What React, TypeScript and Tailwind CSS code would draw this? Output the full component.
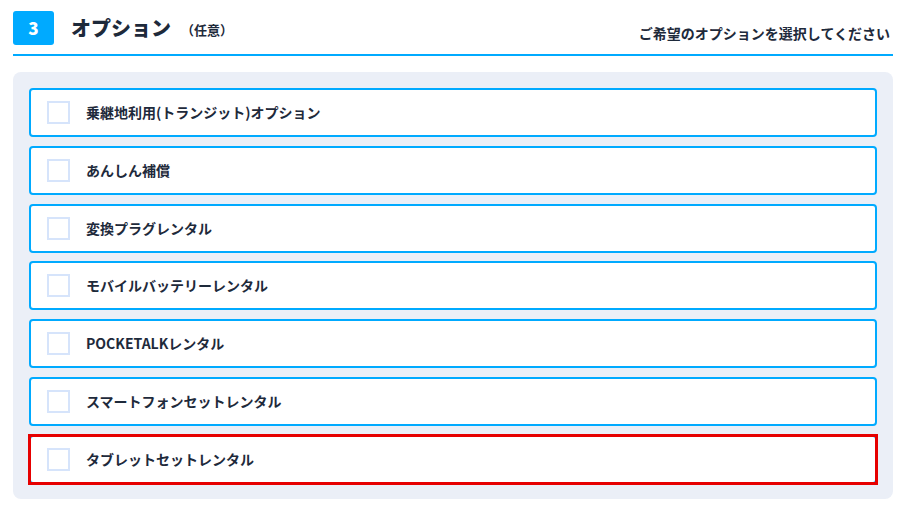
import React from "react";

const options = [
  "乗継地利用(トランジット)オプション",
  "あんしん補償",
  "変換プラグレンタル",
  "モバイルバッテリーレンタル",
  "POCKETALKレンタル",
  "スマートフォンセットレンタル",
  "タブレットセットレンタル",
];

function OptionRow({ label, marked }: { label: string; marked?: boolean }) {
  return (
    <div className="relative">
      <label className="flex h-[49px] cursor-pointer items-center rounded-[4px] border-2 border-[#00aaff] bg-white pl-4">
        <span className="h-[23px] w-[23px] shrink-0 border-2 border-[#d6e4fb] bg-white"></span>
        <span className="ml-4 text-[14px] font-bold text-[#1e2a3b]">{label}</span>
      </label>
      {marked && (
        <div className="pointer-events-none absolute -inset-px border-[3px] border-[#e60000]"></div>
      )}
    </div>
  );
}

export default function App() {
  return (
    <div
      className="min-h-[514px] w-full bg-white pl-[13px] pr-[16px] pt-[11px]"
      style={{ fontFamily: '"Noto Sans CJK JP", "Noto Sans", sans-serif' }}
    >
      <div className="flex items-end justify-between border-b-2 border-[#00aaff] pb-[9px]">
        <div className="flex items-center">
          <div className="flex h-[34px] w-[41px] items-center justify-center rounded-[3px] bg-[#00aaff] text-[17px] font-black text-white">
            3
          </div>
          <h2 className="ml-[17px] text-[20px] font-black leading-none text-[#1e2a3b]">オプション</h2>
          <span className="ml-[10px] mt-[4px] text-[13px] font-bold text-[#1e2a3b]">（任意）</span>
        </div>
        <p className="mr-[3px] pb-[1px] text-[14px] font-bold text-[#1e2a3b]">
          ご希望のオプションを選択してください
        </p>
      </div>

      <div className="mt-[16px] flex flex-col gap-[8.8px] rounded-lg bg-[#ebeff7] px-4 pb-[15px] pt-4">
        {options.map((opt, i) => (
          <OptionRow key={opt} label={opt} marked={i === options.length - 1} />
        ))}
      </div>
    </div>
  );
}
